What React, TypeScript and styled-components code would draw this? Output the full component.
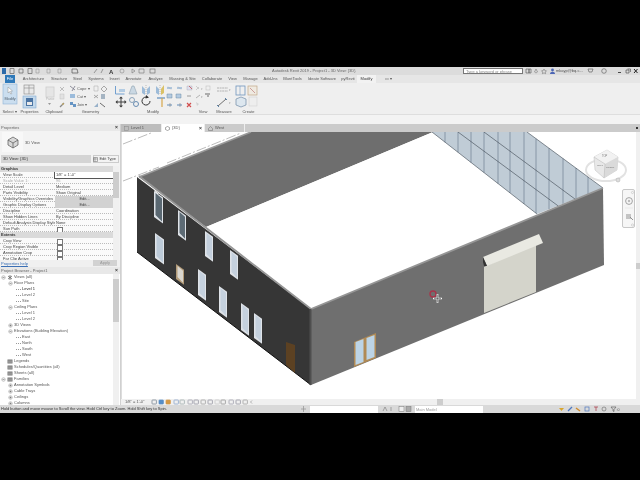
import React from "react";
import styled, { createGlobalStyle } from "styled-components";

const Global = createGlobalStyle`
  html, body { margin: 0; padding: 0; background: #000; }
  body { font-family: "Liberation Sans", Arial, sans-serif; font-size: 4px; color: #444; }
`;

const Page = styled.div`
  width: 640px; height: 480px; padding: 67px 0; box-sizing: border-box; background: #000; overflow: hidden;
`;
const Win = styled.div`
  width: 640px; height: 346px; display: flex; flex-direction: column; background: #f0f0f0; filter: blur(0.42px);
`;
const TitleBar = styled.div`
  height: 8px; flex: none; background: #dcdcdc; display: flex; align-items: center; position: relative;
  svg { display: block; }
`;
const TitleText = styled.div`
  position: absolute; left: 272px; top: 1px; line-height: 6px; color: #666; white-space: nowrap;
`;
const Search = styled.div`
  position: absolute; left: 463px; top: 1px; width: 60px; height: 6px; box-sizing: border-box; background: #fff;
  border: 0.5px solid #777; color: #888; line-height: 5px; padding-left: 2px;
`;
const UserName = styled.div`
  position: absolute; left: 556px; top: 1px; line-height: 6px; color: #555; white-space: nowrap;
`;
const TabBar = styled.div`
  height: 8px; flex: none; background: #e6e6e6; display: flex; align-items: stretch; padding-left: 5px;
`;
const FileTab = styled.div`
  width: 10px; background: #2f79b9; color: #fff; text-align: center; line-height: 7px; margin-right: 4px;
`;
const RibbonTab = styled.div<{ $active?: boolean; $w: number }>`
  width: ${p => p.$w}px; text-align: center; line-height: 8px; white-space: nowrap; flex: none;
  background: ${p => (p.$active ? "#f2f2f2" : "transparent")}; color: ${p => (p.$active ? "#333" : "#555")};
`;
const Ribbon = styled.div`
  height: 32px; flex: none; display: flex; background: #efefef; border-bottom: 1px solid #dedede; box-sizing: border-box;
`;
const Panel = styled.div<{ $w: number }>`
  width: ${p => p.$w}px; flex: none; display: flex; flex-direction: column; align-items: stretch;
  svg { display: block; flex: none; opacity: 0.85; }
`;
const PanelLabel = styled.div`
  height: 6px; line-height: 6px; text-align: center; color: #555; white-space: nowrap;
`;
const Strip = styled.div`height: 9px; flex: none; background: #f3f3f3;`;
const Workspace = styled.div`flex: 1; display: flex; min-height: 0;`;
const Sidebar = styled.div`
  width: 120px; flex: none; display: flex; flex-direction: column; background: #f3f3f3; border-right: 1px solid #d0d0d0;
`;
const PaneHeader = styled.div`
  height: 7px; flex: none; display: flex; justify-content: space-between; align-items: center; padding: 0 2px 0 1px;
  background: #e8e8e8; color: #666; line-height: 7px;
  b { color: #333; font-size: 5px; }
`;
const TypeBlock = styled.div`
  height: 22px; flex: none; display: flex; align-items: center; gap: 2px; padding-left: 2px; color: #555;
  svg { display: block; background: #f8f8f8; }
`;
const TypeRow = styled.div`height: 11px; flex: none; display: flex; align-items: flex-start; gap: 2px; padding: 2px 1px 0;`;
const Select = styled.div`
  width: 90px; flex: none; height: 8px; box-sizing: border-box; line-height: 8px; background: #d4d4d4; padding-left: 2px; color: #333;
`;
const EditType = styled.div`
  flex: 1; min-width: 0; height: 8px; line-height: 8px; display: flex; align-items: center; justify-content: flex-end; gap: 1px; padding-right: 2px; border: 0.5px solid #ccc; box-sizing: border-box; color: #444; white-space: nowrap;
  svg { display: block; flex: none; }
`;
const PropsArea = styled.div`height: 94px; flex: none; display: flex; overflow: hidden;`;
const PropsList = styled.div`flex: 1; min-width: 0;`;
const Group = styled.div`
  height: 6px; line-height: 6px; background: #dadada; padding-left: 1px; color: #333; font-weight: bold; position: relative;
`;
const PropRow = styled.div`
  height: 6px; display: grid; grid-template-columns: 55px 1fr; line-height: 6px; background: #fafafa; border-bottom: 0.5px dotted #bbb; box-sizing: border-box;
`;
const PropName = styled.div<{ $dim?: boolean }>`
  padding-left: 3px; white-space: nowrap; overflow: hidden; color: ${p => (p.$dim ? "#aaa" : "#444")};
`;
const PropValue = styled.div<{ $kind?: string; $dim?: boolean }>`
  padding-left: 1px; color: ${p => (p.$dim ? "#aaa" : "#444")}; white-space: nowrap; box-sizing: border-box;
  ${p => p.$kind === "edit" && "background:#d2d2d2;text-align:center;"}
  ${p => p.$kind === "input" && "background:#fff;outline:0.5px solid #555;outline-offset:-0.5px;"}
`;
const Check = styled.span`
  display: block; width: 4px; height: 4px; margin: 0.5px 0 0 1px; border: 0.5px solid #777; background: #fff;
`;
const VScroll = styled.div<{ $top: number; $h: number }>`
  width: 6px; flex: none; background: #f0f0f0; position: relative; margin-right: 1px;
  &::after { content: ""; position: absolute; left: 0; right: 0; top: ${p => p.$top}px; height: ${p => p.$h}px; background: #cdcdcd; }
`;
const PropFooter = styled.div`
  height: 7px; flex: none; display: flex; justify-content: space-between; padding: 0 2px 0 1px; line-height: 7px; background: #f0f0f0;
  a { color: #3a6fb5; text-decoration: underline; }
`;
const Apply = styled.div`
  width: 24px; height: 6px; line-height: 6px; text-align: center; background: #d2d2d2; color: #999; margin-right: 1px;
`;
const BrowserBody = styled.div`flex: 1; display: flex; min-height: 0; background: #fff;`;
const Tree = styled.div`flex: 1; min-width: 0; overflow: hidden;`;
const TreeRow = styled.div<{ $x: number; $sel?: boolean }>`
  height: 6px; line-height: 6px; display: flex; align-items: center; padding-left: ${p => p.$x}px; gap: 1px; white-space: nowrap;
  color: ${p => (p.$sel ? "#222" : "#555")};
  svg { display: block; flex: none; }
`;
const Dots = styled.span`width: 5px; border-top: 0.5px dotted #999; flex: none;`;

const ViewArea = styled.div`flex: 1; min-width: 0; display: flex; flex-direction: column; background: #fff;`;
const ViewTabs = styled.div`
  height: 8px; flex: none; display: flex; background: #cbcbcb; position: relative;
  &::after { content: ""; position: absolute; right: 2px; top: 3px; width: 2px; height: 2px; background: #333; }
`;
const ViewTab = styled.div<{ $w: number; $active?: boolean }>`
  width: ${p => p.$w}px; box-sizing: border-box; padding: 0 2px 0 10px; line-height: 8px; position: relative;
  display: flex; justify-content: space-between; color: #555;
  background: ${p => (p.$active ? "#fff" : p.$w === 41 ? "#bdbdbd" : "transparent")};
  border-right: 0.5px solid #eee;
  svg { position: absolute; left: 3px; top: 1.5px; }
  b { font-size: 5px; color: #333; }
`;
const CanvasRow = styled.div`flex: 1; min-height: 0; display: flex;`;
const Canvas = styled.div`
  flex: 1; min-width: 0; position: relative; background: #fff; overflow: hidden; border-left: 1px solid #ddd;
  svg { display: block; }
`;
const RightScroll = styled.div`
  width: 4px; flex: none; background: #f0f0f0; position: relative;
  &::after { content: ""; position: absolute; left: 0; right: 0; top: 131px; height: 6px; background: #cdcdcd; }
`;
const NavBar = styled.div`
  position: absolute; left: 500px; top: 57px; width: 13px; height: 39px; background: #f6f6f6; border: 0.5px solid #c8c8c8; border-radius: 2px; box-sizing: border-box;
  svg { display: block; }
`;
const ViewBar = styled.div`
  height: 6px; flex: none; display: flex; align-items: center; background: #f0f0f0; position: relative; line-height: 6px; padding-left: 4px;
  color: #555; white-space: nowrap;
  svg { display: block; margin-left: 5px; opacity: 0.85; }
  &::after { content: ""; position: absolute; left: 316px; top: 0; width: 6px; height: 6px; background: #cdcdcd; }
`;
const StatusBar = styled.div`
  height: 8px; flex: none; background: #d9d9d9; display: flex; align-items: center; position: relative; color: #333; line-height: 8px; white-space: nowrap; padding-left: 1px;
`;
const StatusBox = styled.div<{ $x: number; $w: number }>`
  position: absolute; top: 1px; left: ${p => p.$x}px; width: ${p => p.$w}px; height: 7px; background: #fff; color: #999; line-height: 7px; padding-left: 1px; box-sizing: border-box;
`;
const StatusIcons = styled.svg<{ $x: number }>`position: absolute; left: ${p => p.$x}px; top: 0;`;
const TitleIcons = styled.svg<{ $x: number }>`position: absolute; left: ${p => p.$x}px; top: 0;`;

const ribbonTabs: [string, number, boolean?][] = [
  ["Architecture", 29], ["Structure", 22], ["Steel", 15], ["Systems", 22], ["Insert", 15], ["Annotate", 23], ["Analyze", 21],
  ["Massing & Site", 33], ["Collaborate", 26], ["View", 15], ["Manage", 21], ["Add-Ins", 19], ["BluntTools", 25], ["Ideate Software", 34], ["pyRevit", 18], ["Modify", 19, true], ["▭ ▾", 25],
];

const props: { g?: string; n?: string; v?: string; kind?: string; dim?: boolean; check?: boolean }[] = [
  { g: "Graphics" },
  { n: "View Scale", v: "1/8\" = 1'-0\"", kind: "input" },
  { n: "Scale Value    1:", v: "96", dim: true },
  { n: "Detail Level", v: "Medium" },
  { n: "Parts Visibility", v: "Show Original" },
  { n: "Visibility/Graphics Overrides", v: "Edit...", kind: "edit" },
  { n: "Graphic Display Options", v: "Edit...", kind: "edit" },
  { n: "Discipline", v: "Coordination" },
  { n: "Show Hidden Lines", v: "By Discipline" },
  { n: "Default Analysis Display Style", v: "None" },
  { n: "Sun Path", check: true },
  { g: "Extents" },
  { n: "Crop View", check: true },
  { n: "Crop Region Visible", check: true },
  { n: "Annotation Crop", check: true },
  { n: "Far Clip Active", check: true },
];

type T = { t: string; x: number; box?: string; icon?: string; dots?: boolean; sel?: boolean };
const tree: T[] = [
  { t: "Views (all)", x: 1, box: "-", icon: "views" },
  { t: "Floor Plans", x: 8, box: "-" },
  { t: "Level 1", x: 16, dots: true, sel: true },
  { t: "Level 2", x: 16, dots: true },
  { t: "Site", x: 16, dots: true },
  { t: "Ceiling Plans", x: 8, box: "-" },
  { t: "Level 1", x: 16, dots: true },
  { t: "Level 2", x: 16, dots: true },
  { t: "3D Views", x: 8, box: "+" },
  { t: "Elevations (Building Elevation)", x: 8, box: "-" },
  { t: "East", x: 16, dots: true },
  { t: "North", x: 16, dots: true },
  { t: "South", x: 16, dots: true },
  { t: "West", x: 16, dots: true },
  { t: "Legends", x: 7, icon: "sheet" },
  { t: "Schedules/Quantities (all)", x: 7, icon: "sheet" },
  { t: "Sheets (all)", x: 7, icon: "sheet" },
  { t: "Families", x: 1, box: "-", icon: "sheet" },
  { t: "Annotation Symbols", x: 8, box: "+" },
  { t: "Cable Trays", x: 8, box: "+" },
  { t: "Ceilings", x: 8, box: "+" },
  { t: "Columns", x: 8, box: "+" },
];

const BoxIcon = ({ s }: { s: string }) => (
  <svg width="5" height="5" viewBox="0 0 5 5">
    <circle cx="2.5" cy="2.5" r="1.8" fill="#f4f4f4" stroke="#999" strokeWidth=".5" />
    <path d={s === "-" ? "M1.5 2.5h2" : "M1.5 2.5h2M2.5 1.5v2"} stroke="#555" strokeWidth=".5" />
  </svg>
);
const NodeIcon = ({ k }: { k: string }) => (
  <svg width="6" height="5" viewBox="0 0 6 5">
    {k === "views"
      ? <path d="M1 1l4 3M5 1L1 4M3 0v5" stroke="#555" strokeWidth=".7" />
      : <g><rect x=".5" y=".5" width="5" height="4" fill="#777" /><path d="M1 2h4M1 3.2h4" stroke="#ddd" strokeWidth=".4" /></g>}
  </svg>
);

const Win1 = ({ x, y, w, h, fill, frame = "#dfe3e8" }: { x: number; y: number; w: number; h: number; fill: string; frame?: string }) => {
  const d = w * 0.72;
  return (
    <g>
      <polygon points={`${x},${y} ${x + w},${y + d} ${x + w},${y + d + h} ${x},${y + h}`} fill={frame} />
      <polygon points={`${x + 1.5},${y + 2} ${x + w - 1},${y + d + 1} ${x + w - 1},${y + d + h - 2} ${x + 1.5},${y + h - 2}`} fill={fill} />
    </g>
  );
};

const mullions = [444, 457, 470, 483, 497, 509, 523, 535, 548, 562, 575, 587];

const Building = () => (
  <svg width="515" height="268" viewBox="121 132 515 268">
    <path d="M122 144L150 133M122 181L158 167M166 163L240 133" stroke="#777" strokeWidth=".5" strokeDasharray="10 2 2 2" fill="none" />
    <polygon points="138,177 250,132 432,132 205,227" fill="#6e6e6e" />
    <polygon points="205,227 432,132 536,214 310,309" fill="#fff" />
    <polygon points="431,132 526,132 602,188 536,214" fill="#c0ccd6" />
    {mullions.map(x => {
      const y1 = Math.max(132, 132 + (x - 526) * 0.737);
      const y2 = x <= 536 ? 132 + (x - 431) * 0.78 : 214 - (x - 536) * 0.394;
      return <line key={x} x1={x} x2={x} y1={y1} y2={y2} stroke="#8c9bab" strokeWidth="1.1" />;
    })}
    <path d="M457 132L562 209.500M483 132L578 202M431 132L536 214M526 132L602 188" stroke="#3c4650" strokeWidth=".6" fill="none" />
    <polygon points="136,177 310,309 310,385 136,252" fill="#363636" />
    <path d="M136 252L310 385" stroke="#111" strokeWidth="1" />
    <polygon points="310,309 602,188 603,265 310,385" fill="#6f6f6f" />
    <path d="M138 177L250 132" stroke="#9a9a9a" strokeWidth="1.6" />
    <path d="M138 176L310 309L602 188" stroke="#969696" strokeWidth="1.8" fill="none" />
    <line x1="309.5" y1="309" x2="309.5" y2="385" stroke="#4e4e4e" strokeWidth="2" />
    <polygon points="153,190 158,194 155,194" fill="#fff" />
    <Win1 x={153} y={191} w={9} h={26} fill="#5a6872" />
    <Win1 x={177} y={210} w={8} h={25} fill="#5d6b75" />
    <Win1 x={204} y={231} w={8} h={25} fill="#c3cfdc" />
    <Win1 x={229} y={250} w={8} h={24} fill="#c5d1de" />
    <Win1 x={154} y={233} w={9} h={25} fill="#bccad8" />
    <Win1 x={175} y={264} w={8} h={15} fill="#d9d6cf" frame="#b39b78" />
    <Win1 x={197} y={269} w={8} h={26} fill="#c5d1de" />
    <Win1 x={218} y={286} w={8} h={26} fill="#c5d1de" />
    <Win1 x={240} y={303} w={8} h={27} fill="#c5d1de" />
    <Win1 x={253} y={313} w={8} h={25} fill="#c5d1de" />
    <polygon points="285,342 294,345 294,373 285,365" fill="#5c4122" />
    <polygon points="353,342 375,333 375,358 353,367" fill="#b08a55" />
    <polygon points="354.5,342 362.5,339 362.5,362 354.5,365" fill="#bcd4e6" />
    <polygon points="365.5,338 373.5,335 373.5,357 365.5,360" fill="#bcd4e6" />
    <polygon points="483,267 535,243 535,292 483,313" fill="#d4d4cb" />
    <polygon points="482,257 538,234 542,243 486,266" fill="#e9e9e2" />
    <polygon points="482,257 486,266 483,266 482,262" fill="#333" />
    <circle cx="432" cy="294" r="3" fill="none" stroke="#a8344a" strokeWidth="1.4" />
    <path d="M436.5 294v9M432 298.5h9" stroke="#fff" strokeWidth="1.6" />
    <path d="M436.5 294.5v8M433 298.5h7" stroke="#333" strokeWidth=".5" />

    <ellipse cx="605" cy="170" rx="20" ry="11" fill="none" stroke="#e2e2e2" strokeWidth="2" />
    <polygon points="593,157 606,150 617,157 616,170 603,178 594,170" fill="#e8e8e8" stroke="#bdbdbd" strokeWidth=".5" />
    <polygon points="593,157 606,150 617,157 604,164" fill="#f2f2f2" />
    <polygon points="604,164 617,157 616,170 603,178" fill="#dadada" />
    <path d="M604 164L603 178M604 164L593 157" stroke="#b4b4b4" strokeWidth=".5" />
    <text x="601" y="157" fontSize="2.6" fill="#777">TOP</text>
    <text x="596" y="166" fontSize="2.4" fill="#777">LEFT</text>
    <text x="605" y="168" fontSize="2.4" fill="#777">FRONT</text>
    <circle cx="617" cy="180" r="2" fill="#ddd" stroke="#aaa" strokeWidth=".5" />
  </svg>
);

const Select0 = () => (
  <svg width="19" height="26" viewBox="0 83 19 26">
    <rect x="3" y="84" width="14" height="20" fill="#c5dcf0" stroke="#7fa9d0" strokeWidth=".6" />
    <path d="M8 87l0 6 1.5-1.3 1.3 2.4 1-.5-1.3-2.3 2-.3z" fill="#fff" stroke="#666" strokeWidth=".4" />
    <text x="10" y="100" fontSize="3.8" textAnchor="middle" fill="#345">Modify</text>
  </svg>
);
const Props0 = () => (
  <svg width="21" height="26" viewBox="19 83 21 26">
    <rect x="24" y="85" width="10" height="9" fill="#e8e8e8" stroke="#777" strokeWidth=".6" />
    <path d="M24 88h10M29 85v9" stroke="#777" strokeWidth=".6" />
    <rect x="23" y="96" width="13" height="12" fill="#bcd4ea" stroke="#6f9fce" strokeWidth=".6" />
    <rect x="26" y="98" width="7" height="8" fill="#2f5f96" />
    <rect x="27" y="102" width="5" height="3" fill="#e8e8e8" />
  </svg>
);
const Clip0 = () => (
  <svg width="28" height="26" viewBox="40 83 28 26">
    <rect x="46" y="87" width="8" height="10" fill="#e4e4e4" stroke="#c8c8c8" strokeWidth=".8" />
    <text x="50" y="100" fontSize="3.4" textAnchor="middle" fill="#aaa">Paste</text>
    <path d="M48 103h3l-1.5 2z" fill="#888" />
    <path d="M60 87l4 4M64 87l-4 4" stroke="#999" strokeWidth=".7" />
    <rect x="60" y="94" width="4" height="5" fill="#e0e0e0" stroke="#bbb" strokeWidth=".5" />
    <path d="M60 107l4-4" stroke="#777" strokeWidth="1.2" /><path d="M62 104l2 0" stroke="#c9a13b" strokeWidth="1" />
  </svg>
);
const Geo0 = () => (
  <svg width="45" height="26" viewBox="68 83 45 26">
    <path d="M70 86l5 4M75 86l-3 5" stroke="#667" strokeWidth=".8" />
    <text x="77" y="90" fontSize="4" fill="#444">Cope ▾</text>
    <path d="M70 94h5v4h-5z" fill="#8db3d8" />
    <text x="77" y="98" fontSize="4" fill="#444">Cut ▾</text>
    <path d="M70 102h3v3h-3zM73 104h3v3h-3z" fill="#4f86bd" />
    <text x="77" y="106" fontSize="4" fill="#444">Join ▾</text>
    <path d="M94 86h4v5h-4z" fill="none" stroke="#aaa" strokeWidth=".6" />
    <path d="M101 89l3-3 3 3-3 3z" fill="none" stroke="#777" strokeWidth=".7" />
    <path d="M94 95l4 3M98 95l-4 3" stroke="#777" strokeWidth=".7" />
    <path d="M101 94h4v5h-4z" fill="#9ab" />
    <path d="M94 107l4-4v4z" fill="#8aa7c4" /><path d="M100 103l5 4" stroke="#555" strokeWidth="1" />
  </svg>
);
const Mod0 = () => (
  <svg width="80" height="26" viewBox="113 83 80 26">
    <path d="M115.5 86v8h9" fill="none" stroke="#5d93cb" strokeWidth="1" />
    <path d="M119 89h6v3h-6z" fill="#a9c6e2" />
    <path d="M129 94l3-8h2l3 8z" fill="#c4d4e2" stroke="#7e93a5" strokeWidth=".6" />
    <path d="M146 85v10" stroke="#888" strokeWidth=".6" strokeDasharray="1 1" />
    <path d="M142 86l3 3v6l-3-2zM150 86l-3 3v6l3-2z" fill="#8fb3d4" />
    <path d="M160 85v10" stroke="#888" strokeWidth=".6" strokeDasharray="1 1" />
    <path d="M156 86l3 3v6l-3-2z" fill="#8fb3d4" /><path d="M164 85l-3 4v6l3-2z" fill="#d7b94f" />
    <path d="M167 88h5M177 88h5" stroke="#5b8fc4" strokeWidth="1" /><path d="M168 86.5l3 3M178 86.5l3 3" stroke="#89a" strokeWidth=".5" />
    <path d="M187 86h5v4h-5z" fill="#dde" stroke="#99a" strokeWidth=".4" /><path d="M189 86l3 3" stroke="#b33" strokeWidth=".8" />
    <path d="M167 94h5v4h-5zM176 94h5v4h-5z" fill="#a9c4de" stroke="#56789a" strokeWidth=".5" />
    <path d="M187 96h4" stroke="#777" strokeWidth=".8" />
    <path d="M167 105h5M177 105h5" stroke="#4b7eb4" strokeWidth="1.2" /><path d="M170 103v4M180 103v4" stroke="#555" strokeWidth=".5" />
    <path d="M187 103l4 4M191 103l-4 4" stroke="#c33" strokeWidth="1.2" />
    <path d="M121 97v10M116 102h10" stroke="#222" strokeWidth="1" />
    <path d="M121 96.5l-2 2h4zM121 107.5l-2-2h4zM115.5 102l2-2v4zM126.5 102l-2-2v4z" fill="#222" />
    <circle cx="132" cy="100" r="2.5" fill="none" stroke="#6d8ba8" strokeWidth=".9" /><circle cx="136" cy="104" r="2.5" fill="none" stroke="#3f6f9f" strokeWidth=".9" />
    <path d="M150 101a4 4 0 1 1-2-3.4" fill="none" stroke="#111" strokeWidth="1" /><path d="M146 95l3 2.6-3.4 1z" fill="#111" />
    <path d="M157 98h8" stroke="#5e8dbc" strokeWidth="1.4" /><path d="M162 98v9" stroke="#d19a2e" strokeWidth="1.2" />
  </svg>
);
const View0 = () => (
  <svg width="20" height="26" viewBox="193 83 20 26">
    <path d="M196 86l3 3M196 90l3-3" stroke="#aaa" strokeWidth=".6" /><text x="201" y="90" fontSize="3" fill="#999">▾</text>
    <rect x="206" y="86" width="4" height="4" fill="none" stroke="#bbb" strokeWidth=".6" />
    <path d="M196 98l4-3" stroke="#888" strokeWidth=".7" /><text x="201" y="98" fontSize="3" fill="#888">▾</text>
    <path d="M205 94h5" stroke="#555" strokeWidth="1" /><path d="M207 96h2" stroke="#555" strokeWidth="1" />
    <path d="M196 102l3 2-2 2z" fill="#ccc" />
  </svg>
);
const Meas0 = () => (
  <svg width="22" height="26" viewBox="213 83 22 26">
    <path d="M217 88h11M217 91h11" stroke="#777" strokeWidth=".6" strokeDasharray="2 .6" /><text x="229" y="91" fontSize="3" fill="#888">▾</text>
    <path d="M218 106l8-7" stroke="#333" strokeWidth=".8" /><path d="M217 105l2 2M225 98l2 2" stroke="#3f6fa0" strokeWidth="1" /><text x="229" y="104" fontSize="3" fill="#888">▾</text>
  </svg>
);
const Create0 = () => (
  <svg width="27" height="26" viewBox="235 83 27 26">
    <rect x="236" y="86" width="9" height="9" fill="none" stroke="#5b87b5" strokeWidth=".8" /><path d="M240 86v9" stroke="#5b87b5" strokeWidth=".6" />
    <rect x="248" y="86" width="9" height="9" fill="#f0eadf" stroke="#b99a76" strokeWidth=".7" /><path d="M250 88l5 5" stroke="#a55" strokeWidth=".6" />
    <path d="M236 99l5-2 5 2v6l-5 2-5-2z" fill="#dbe6f0" stroke="#5a7a9a" strokeWidth=".7" />
    <rect x="249" y="97" width="8" height="9" fill="#eee" stroke="#ccc" strokeWidth=".6" />
  </svg>
);

const viewBarIcons = [150, 157, 164, 172, 178, 186, 192, 199, 206, 213, 219, 227, 234, 241];
const iconColors = ["#567", "#3b7cc0", "#d08a2a", "#6a8cc0", "#899", "#889", "#778", "#888", "#778", "#bbb", "#777", "#889", "#778", "#888"];

export default function App() {
  return (
    <Page>
      <Global />
      <Win>
        <TitleBar>
          <svg width="170" height="8" viewBox="0 0 170 8">
            <rect x="2" y="1" width="4" height="6" fill="#2d6aa8" />
            <path d="M10 1.5h4v5h-4zM19 2h4v4h-4zM28 1.5h4v5h-4z" fill="none" stroke="#666" strokeWidth=".7" />
            <path d="M36 2h3v4h-3zM47 2h3v4h-3zM58 2h3v4h-3z" fill="none" stroke="#999" strokeWidth=".6" />
            <path d="M72 2h5l1 4h-6z" fill="none" stroke="#555" strokeWidth=".7" />
            <path d="M94 6l3-4M101 6l2-4" stroke="#777" strokeWidth=".7" />
            <text x="109" y="6.5" fontSize="6" fontWeight="bold" fill="#333">A</text>
            <circle cx="122" cy="4" r="2" fill="none" stroke="#888" strokeWidth=".6" />
            <path d="M132 2l3 2-3 2zM139 2h5v4h-5z" fill="none" stroke="#777" strokeWidth=".6" />
            <rect x="150" y="2" width="5" height="4" fill="none" stroke="#666" strokeWidth=".6" />
          </svg>
          <TitleText>Autodesk Revit 2019 - Project1 - 3D View: {"{3D}"}</TitleText>
          <Search>Type a keyword or phrase</Search>
          <TitleIcons $x={525} width="7" height="8" viewBox="0 0 7 8">
            <path d="M1 2h3v4h-3zM4 2h2v4h-2z" fill="none" stroke="#555" strokeWidth=".6" />
          </TitleIcons>
          <TitleIcons $x={532} width="24" height="8" viewBox="0 0 24 8">
            <path d="M4 2l1.5 3-1.5 1-1.5-1zM12 2l.8 1.6 1.7.2-1.2 1.2.3 1.7-1.6-.8-1.6.8.3-1.7-1.2-1.2 1.7-.2z" fill="none" stroke="#666" strokeWidth=".5" />
            <circle cx="20.5" cy="3" r="1.4" fill="#4c66b5" /><path d="M18 7c0-3 5-3 5 0z" fill="#4c66b5" />
          </TitleIcons>
          <UserName>mkayp@bq.c...</UserName>
          <TitleIcons $x={580} width="60" height="8" viewBox="0 0 60 8">
            <path d="M8 2h5l-1 3h-3z" fill="none" stroke="#555" strokeWidth=".6" />
            <circle cx="24" cy="4" r="2.3" fill="none" stroke="#555" strokeWidth=".6" />
            <path d="M38 5.5h3" stroke="#222" strokeWidth=".8" />
            <path d="M46 3h3v3h-3zM47.5 2h3v3" fill="none" stroke="#444" strokeWidth=".6" />
            <path d="M54 2l3.5 4M57.5 2L54 6" stroke="#222" strokeWidth="1" />
          </TitleIcons>
        </TitleBar>
        <TabBar>
          <FileTab>File</FileTab>
          {ribbonTabs.map(([t, w, a]) => <RibbonTab key={t} $w={w} $active={a}>{t}</RibbonTab>)}
        </TabBar>
        <Ribbon>
          <Panel $w={19}><Select0 /><PanelLabel>Select ▾</PanelLabel></Panel>
          <Panel $w={21}><Props0 /><PanelLabel>Properties</PanelLabel></Panel>
          <Panel $w={28}><Clip0 /><PanelLabel>Clipboard</PanelLabel></Panel>
          <Panel $w={45}><Geo0 /><PanelLabel>Geometry</PanelLabel></Panel>
          <Panel $w={80}><Mod0 /><PanelLabel>Modify</PanelLabel></Panel>
          <Panel $w={20}><View0 /><PanelLabel>View</PanelLabel></Panel>
          <Panel $w={22}><Meas0 /><PanelLabel>Measure</PanelLabel></Panel>
          <Panel $w={27}><Create0 /><PanelLabel>Create</PanelLabel></Panel>
        </Ribbon>
        <Strip />
        <Workspace>
          <Sidebar>
            <PaneHeader><span>Properties</span><b>×</b></PaneHeader>
            <TypeBlock>
              <svg width="21" height="20" viewBox="0 0 21 20">
                <path d="M6 8l5-3 5 3v5l-5 3-5-3z" fill="#d8d8d8" stroke="#555" strokeWidth=".7" />
                <path d="M6 8l5 3 5-3M11 11v5" fill="none" stroke="#555" strokeWidth=".7" />
              </svg>
              <span>3D View</span>
            </TypeBlock>
            <TypeRow>
              <Select>3D View: {"{3D}"}</Select>
              <EditType>
                <svg width="5" height="5" viewBox="0 0 5 5"><path d="M.5.5h4v4h-4zM.5 2h4M2 .5v4" fill="none" stroke="#666" strokeWidth=".5" /></svg>
                <span>Edit Type</span>
              </EditType>
            </TypeRow>
            <PropsArea>
              <PropsList>
                {props.map((p, i) =>
                  p.g ? <Group key={i}>{p.g}</Group> : (
                    <PropRow key={i}>
                      <PropName $dim={p.dim}>{p.n}</PropName>
                      <PropValue $kind={p.kind} $dim={p.dim}>{p.check ? <Check /> : p.v}</PropValue>
                    </PropRow>
                  ))}
              </PropsList>
              <VScroll $top={6} $h={26} />
            </PropsArea>
            <PropFooter><a>Properties help</a><Apply>Apply</Apply></PropFooter>
            <PaneHeader><span>Project Browser - Project1</span><b>×</b></PaneHeader>
            <BrowserBody>
              <Tree>
                {tree.map((r, i) => (
                  <TreeRow key={i} $x={r.x} $sel={r.sel}>
                    {r.box && <BoxIcon s={r.box} />}
                    {r.icon && <NodeIcon k={r.icon} />}
                    {r.dots && <Dots />}
                    <span>{r.t}</span>
                  </TreeRow>
                ))}
              </Tree>
              <VScroll $top={5} $h={43} />
            </BrowserBody>
          </Sidebar>
          <ViewArea>
            <ViewTabs>
              <ViewTab $w={41}>
                <svg width="5" height="5" viewBox="0 0 5 5"><rect x=".5" y=".5" width="4" height="4" fill="none" stroke="#888" strokeWidth=".5" /></svg>
                <span>Level 1</span>
              </ViewTab>
              <ViewTab $w={43} $active>
                <svg width="5" height="5" viewBox="0 0 5 5"><path d="M.5 1.5l2-1 2 1v2l-2 1-2-1z" fill="none" stroke="#555" strokeWidth=".5" /></svg>
                <span>{"{3D}"}</span><b>×</b>
              </ViewTab>
              <ViewTab $w={40}>
                <svg width="5" height="5" viewBox="0 0 5 5"><path d="M.5 2.5l2-2 2 2v2h-4z" fill="none" stroke="#666" strokeWidth=".5" /></svg>
                <span>West</span>
              </ViewTab>
            </ViewTabs>
            <CanvasRow>
              <Canvas>
                <Building />
                <NavBar>
                  <svg width="12" height="38" viewBox="0 0 12 38">
                    <circle cx="6" cy="11" r="3.4" fill="none" stroke="#9a9a9a" strokeWidth=".9" />
                    <circle cx="6" cy="11" r="1.2" fill="#bbb" />
                    <path d="M3 24h5v5H3z" fill="#c4c4c4" /><path d="M7 27l3 3" stroke="#888" strokeWidth=".9" />
                    <path d="M2 18h8" stroke="#ddd" strokeWidth=".5" />
                    <circle cx="9.5" cy="2.5" r="1.1" fill="none" stroke="#aaa" strokeWidth=".4" />
                    <circle cx="9.5" cy="35" r="1.1" fill="none" stroke="#aaa" strokeWidth=".4" />
                  </svg>
                </NavBar>
              </Canvas>
              <RightScroll />
            </CanvasRow>
            <ViewBar>
              <span>1/8" = 1'-0"</span>
              <svg width="105" height="6" viewBox="146 0 105 6">
                {viewBarIcons.map((x, i) => (
                  <rect key={x} x={x - 2} y="1" width="4.4" height="4" rx=".6" fill={i === 1 || i === 2 ? iconColors[i] : "none"} stroke={iconColors[i]} strokeWidth=".7" />
                ))}
                <path d="M248 1.5l-1.5 1.5 1.5 1.5" fill="none" stroke="#555" strokeWidth=".5" />
              </svg>
            </ViewBar>
          </ViewArea>
        </Workspace>
        <StatusBar>
          Hold button and move mouse to Scroll the view. Hold Ctrl key to Zoom. Hold Shift key to Spin.
          <StatusIcons $x={300} width="8" height="8" viewBox="0 0 8 8">
            <path d="M3.5 1v6M1 4h5" stroke="#999" strokeWidth=".8" />
          </StatusIcons>
          <StatusBox $x={310} $w={68} />
          <StatusIcons $x={382} width="16" height="8" viewBox="0 0 16 8">
            <path d="M1 6l2-4 2 4M9 2v4" stroke="#666" strokeWidth=".5" fill="none" />
          </StatusIcons>
          <StatusIcons $x={398} width="16" height="8" viewBox="0 0 16 8">
            <rect x="1" y="1.5" width="5" height="5" fill="#eee" stroke="#777" strokeWidth=".5" />
            <rect x="8" y="1.5" width="5" height="5" fill="#aaa" stroke="#777" strokeWidth=".5" />
          </StatusIcons>
          <StatusBox $x={415} $w={68}>Main Model</StatusBox>
          <StatusIcons $x={558} width="62" height="8" viewBox="558 0 62 8">
            <path d="M559 3h5l-2.500 3z" fill="#d9a52c" />
            <path d="M568 6l4-4" stroke="#4f78c0" strokeWidth="1.2" />
            <path d="M576 3l4 3" stroke="#d08a2a" strokeWidth="1.4" />
            <rect x="585" y="2" width="4" height="4" fill="none" stroke="#4f78c0" strokeWidth=".7" />
            <path d="M594 2h2v4M598 2h-2" stroke="#a34" strokeWidth=".7" fill="none" />
            <circle cx="604" cy="4" r="2" fill="none" stroke="#666" strokeWidth=".6" />
            <path d="M611 2h5l-2 2.500v2l-1-.5v-1.500z" fill="none" stroke="#555" strokeWidth=".6" />
            <text x="616.500" y="6" fontSize="3.6" fill="#555">:0</text>
          </StatusIcons>
        </StatusBar>
      </Win>
    </Page>
  );
}
